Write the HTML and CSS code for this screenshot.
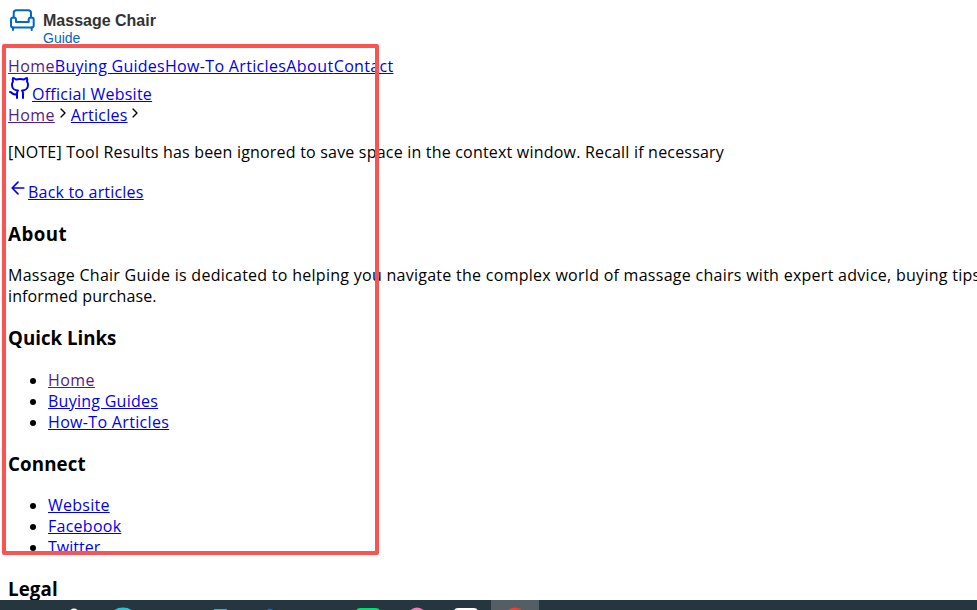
FILE: index.html
```html
<!DOCTYPE html>
<html lang="en">
<head>
<meta charset="utf-8">
<title>Massage Chair Guide</title>
<link rel="stylesheet" href="styles.css">
</head>
<body>
<header>
<a class="logo" href="#">
<svg class="logo-mark" width="180" height="48" viewBox="0 0 180 48">
<g fill="none" stroke="#0066cc" stroke-width="2" stroke-linecap="round" stroke-linejoin="round">
<path d="M5.700 9.500V5Q5.700 2.300 8.500 2.300H20Q23 2.300 23 5V9.500"/>
<path d="M3 17.500V11.500Q3 9.500 5.500 9.500Q8 9.500 8 11.500V14H20.700V11.500Q20.700 9.500 23.200 9.500Q25.700 9.500 25.700 11.500V17.500Q25.700 19.400 23.700 19.400H5Q3 19.400 3 17.500Z"/>
<path d="M5 19.500V22M23.700 19.500V22"/>
</g>
<text class="brand" x="35" y="18">Massage Chair</text>
<text class="brand-sub" x="35" y="35">Guide</text>
</svg>
</a>
<nav class="line"><a class="visited" href="#">Home</a><a href="#">Buying Guides</a><a class="mid" href="#">How-To Articles</a><a class="wide" href="#">About</a><a class="mid" href="#">Contact</a></nav>
<div class="official"><a href="#"><svg class="icon" width="24" height="24" viewBox="0 0 24 24"><path d="M15 22v-4a4.800 4.800 0 0 0-1-3.500c3 0 6-2 6-5.500.08-1.250-.27-2.480-1-3.500.28-1.150.28-2.350 0-3.500 0 0-1 0-3 1.500-2.640-.5-5.360-.5-8 0C6 2 5 2 5 2c-.3 1.150-.3 2.350 0 3.500A5.403 5.403 0 0 0 4 9c0 3.500 3 5.500 6 5.500-.39.49-.68 1.050-.85 1.650-.17.6-.22 1.230-.15 1.850v4"/><path d="M9 18c-4.510 2-5-2-7-2"/></svg>Official Website</a></div>
</header>
<main>
<div class="crumbs"><a class="visited" href="#">Home</a><svg class="icon" width="16" height="16" viewBox="0 0 24 24"><path d="m9 18 6-6-6-6"/></svg><a href="#">Articles</a><svg class="icon nudge" width="16" height="16" viewBox="0 0 24 24"><path d="m9 18 6-6-6-6"/></svg></div>
<p class="note">[NOTE] Tool Results has been ignored to save space in the context window. Recall if necessary</p>
<div class="back"><a href="#"><svg class="icon" width="20" height="20" viewBox="0 0 24 24"><path d="m12 19-7-7 7-7M19 12H5"/></svg>Back to articles</a></div>
</main>
<footer>
<h3 class="wide">About</h3>
<p class="about">Massage Chair Guide is dedicated to helping you navigate the complex world of massage chairs with expert advice, buying tips<br><span class="tight">informed purchase.</span></p>
<h3 class="raised">Quick Links</h3>
<ul><li><a class="visited" href="#">Home</a></li><li><a href="#">Buying Guides</a></li><li><a class="mid" href="#">How-To Articles</a></li></ul>
<h3 class="tight">Connect</h3>
<ul><li><a href="#">Website</a></li><li><a href="#">Facebook</a></li><li><a class="flat" href="#">Twitter</a></li></ul>
<h3 class="raised tight">Legal</h3>
</footer>
<div class="frame"></div>
<svg class="taskbar" width="977" height="10" viewBox="0 0 977 10">
<rect width="977" height="10" fill="#25363e"/>
<rect x="491" width="48" height="10" fill="#535f65"/>
<circle cx="74" cy="13" r="4.500" fill="#fff"/>
<ellipse cx="123" cy="16" rx="12" ry="8.500" fill="#2fc0d2"/>
<rect x="214" y="9" width="13" height="4" fill="#38aee6"/>
<circle cx="270" cy="12" r="3.500" fill="#1769b5"/>
<rect x="356" y="8" width="24" height="10" rx="4" fill="#07d974"/>
<circle cx="417" cy="17" r="9.500" fill="#f47fb8"/>
<rect x="454" y="8" width="24" height="10" rx="4" fill="#fff"/>
<circle cx="515" cy="18" r="10.500" fill="#e84335"/>
</svg>
</body>
</html>
```
FILE: styles.css
```css
body {
  margin: 8px 0 0 8px;
  height: 594px;
  background: #fff;
  color: #000;
  font: 16px/21px "Open Sans", "Noto Sans", sans-serif;
  white-space: nowrap;
  overflow: hidden;
}
a { color: #0000ee; text-decoration: underline; letter-spacing: 0.26px; }
a.visited { color: #551a8b; letter-spacing: 0.4px; }
.logo { display: block; height: 48px; letter-spacing: 0; }
.logo-mark { display: block; }
.brand { font: bold 16px "Liberation Sans", sans-serif; fill: #333; }
.brand-sub { font: 14px "Liberation Sans", sans-serif; fill: #0066cc; }
.mid { letter-spacing: 0.33px; }
.wide { letter-spacing: 0.5px; }
.tight { letter-spacing: 0.12px; }
.flat { letter-spacing: 0; }
.line, .crumbs { height: 21px; }
.official { height: 29px; margin-top: -1px; }
.icon {
  fill: none;
  stroke: currentColor;
  stroke-width: 2;
  stroke-linecap: round;
  stroke-linejoin: round;
}
.nudge { margin-left: -1px; }
p { margin: 16px 0; }
.note { margin-bottom: 15px; letter-spacing: 0.2px; }
.about { margin-top: 19.7px; letter-spacing: 0.275px; }
.back { height: 24px; }
.back a { letter-spacing: 0.2px; }
h3 { margin: 18.7px 0; font-size: 18.72px; line-height: 25px; }
h3.raised { margin: 17.7px 0 19.7px; }
ul { margin: 18.7px 0; padding-left: 40px; }
ul:has(+ .raised), .about:has(+ .raised) { margin-bottom: 0; }
.frame {
  position: absolute;
  left: 2px;
  top: 44px;
  width: 377px;
  height: 511px;
  box-sizing: border-box;
  border: 4px solid #fb5252;
  border-radius: 2px;
}
.taskbar { position: absolute; left: 0; top: 600px; }
```
